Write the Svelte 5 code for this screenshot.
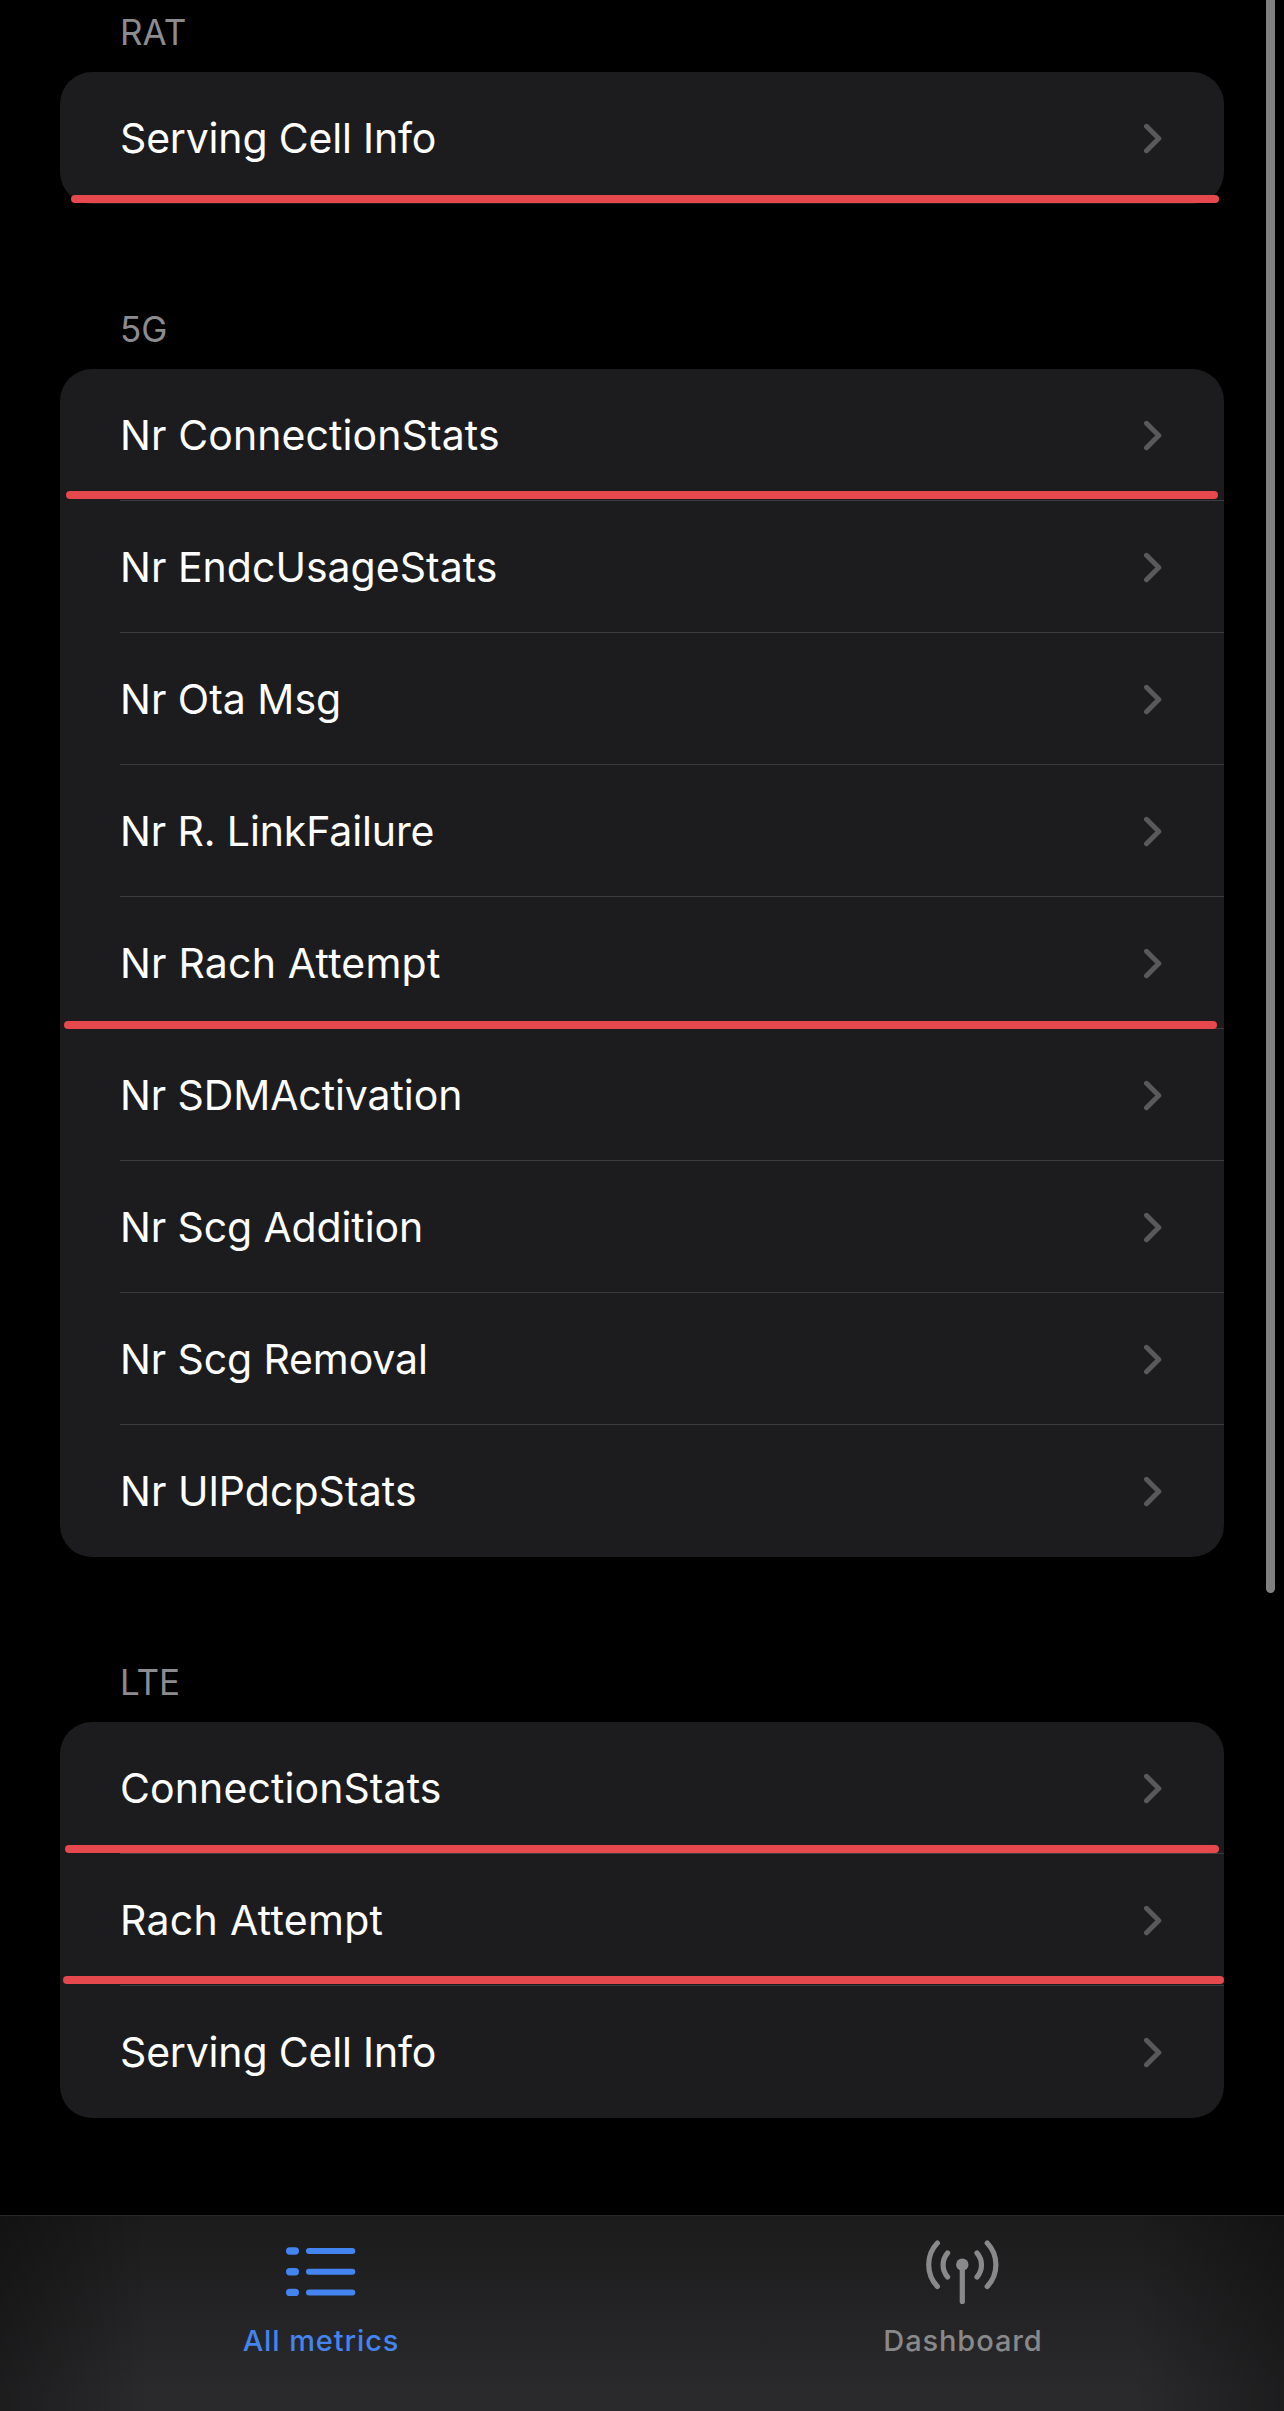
<script>
  // Each underline is given by its left edge, width and distance above the row's bottom.
  // Tracking is the label's letter spacing in pixels.
  const sections = [
    {
      title: 'RAT',
      rows: [
        { label: 'Serving Cell Info', tracking: -0.18, mark: { left: 11, width: 1148, bottom: 1.5 } }
      ]
    },
    {
      title: '5G',
      rows: [
        { label: 'Nr ConnectionStats', tracking: 0.1, mark: { left: 6, width: 1152, bottom: 2.5 } },
        { label: 'Nr EndcUsageStats', tracking: 0.02 },
        { label: 'Nr Ota Msg', tracking: 0 },
        { label: 'Nr R. LinkFailure', tracking: -0.12 },
        { label: 'Nr Rach Attempt', tracking: 0.2, mark: { left: 4, width: 1153, bottom: 0 } },
        { label: 'Nr SDMActivation', tracking: -0.1 },
        { label: 'Nr Scg Addition', tracking: -0.12 },
        { label: 'Nr Scg Removal', tracking: -0.12 },
        { label: 'Nr UlPdcpStats', tracking: 0.08 }
      ]
    },
    {
      title: 'LTE',
      rows: [
        { label: 'ConnectionStats', tracking: 0.1, mark: { left: 5, width: 1154, bottom: 1 } },
        { label: 'Rach Attempt', tracking: 0.3, mark: { left: 3, width: 1161, bottom: 2 } },
        { label: 'Serving Cell Info', tracking: -0.18 }
      ]
    }
  ];
</script>

<div class="screen">
  <main>
    {#each sections as section}
      <section>
        <h2>{section.title}</h2>
        <ul>
          {#each section.rows as row}
            <li>
              <span class="label" style="letter-spacing: {row.tracking}px">{row.label}</span>
              <svg class="chevron" width="18" height="31" viewBox="0 0 18 31">
                <path d="M2.500 3.300 L14.800 15.500 L2.500 27.700" />
              </svg>
              {#if row.mark}
                <span
                  class="mark"
                  style="left: {row.mark.left}px; width: {row.mark.width}px; bottom: {row.mark.bottom}px"
                ></span>
              {/if}
            </li>
          {/each}
        </ul>
      </section>
    {/each}
  </main>

  <nav>
    <a class="tab active" href="#metrics">
      <svg width="80" height="66" viewBox="1 0 80 66">
        <g stroke-width="7.4">
          <path d="M9.7 20H15.3M9.7 40.7H15.3M9.7 61.4H15.3" />
        </g>
        <g stroke-width="6">
          <path d="M29 20H72.3M29 40.7H72.3M29 61.4H72.3" />
        </g>
      </svg>
      <span>All metrics</span>
    </a>
    <a class="tab" href="#dashboard">
      <svg width="80" height="66" viewBox="0.7 0 80 66">
        <g stroke-width="5.2">
          <path d="M15.100 12C3.500 24 3.500 43.500 15.100 55.500M64.900 12C76.500 24 76.500 43.500 64.900 55.500" />
          <path d="M25.300 22C19.300 29 19.300 39 25.300 46M54.700 22C60.700 29 60.700 39 54.700 46" />
          <path d="M40 36V70.500" />
        </g>
        <circle cx="40" cy="33.700" r="6.200" />
      </svg>
      <span>Dashboard</span>
    </a>
  </nav>

  <div class="scrollbar"></div>
</div>

<style>
  :global(body) {
    margin: 0;
    background: #000;
  }
  .screen {
    position: relative;
    display: flex;
    flex-direction: column;
    width: 1284px;
    height: 2411px;
    overflow: hidden;
    background: #000;
    font-family: Inter, 'Liberation Sans', sans-serif;
  }
  main {
    flex: 1;
    padding: 0 60px;
  }
  section {
    padding-top: 103px;
  }
  section:first-child {
    padding-top: 10px;
  }
  h2 {
    margin: 0;
    padding: 0 60px 18px;
    height: 44px;
    font-size: 35px;
    line-height: 44px;
    font-weight: 400;
    color: #8c8c90;
  }
  ul {
    list-style: none;
    margin: 0;
    padding: 0;
    border-radius: 32px;
    background: #1c1c1e;
  }
  li {
    position: relative;
    display: flex;
    align-items: center;
    justify-content: space-between;
    height: 132px;
    padding: 0 62px 0 60px;
  }
  li:not(:last-child)::after {
    content: '';
    position: absolute;
    left: 60px;
    right: 0;
    bottom: 0;
    height: 1px;
    background: #3c3c3f;
  }
  .label {
    font-size: 41px;
    line-height: 50px;
    color: #fff;
  }
  .chevron {
    fill: none;
    stroke: #59595c;
    stroke-width: 5;
    stroke-linecap: round;
    stroke-linejoin: round;
  }
  .mark {
    position: absolute;
    z-index: 1;
    height: 8px;
    border-radius: 4px;
    background: #e5484d;
  }
  nav {
    display: flex;
    height: 195px;
    border-top: 1px solid #29292b;
    background:
      linear-gradient(
        90deg,
        rgba(0, 0, 0, 0.32),
        transparent 150px,
        transparent calc(100% - 150px),
        rgba(0, 0, 0, 0.32)
      ),
      linear-gradient(#1b1b1c, #2a2a2c 90%);
  }
  .tab {
    flex: 1;
    display: flex;
    flex-direction: column;
    align-items: center;
    padding-top: 15px;
    color: #89898b;
    font-size: 29px;
    font-weight: 500;
    letter-spacing: 0.9px;
    line-height: 36px;
    text-decoration: none;
  }
  .tab.active {
    color: #4384f0;
  }
  .tab svg {
    overflow: visible;
    margin-bottom: 26px;
    fill: currentColor;
    stroke: currentColor;
    stroke-linecap: round;
  }
  .tab path {
    fill: none;
  }
  .tab circle {
    stroke: none;
  }
  .scrollbar {
    position: absolute;
    top: -20px;
    right: 9px;
    width: 9px;
    height: 1613px;
    border-radius: 5px;
    background: #808080;
  }
</style>
